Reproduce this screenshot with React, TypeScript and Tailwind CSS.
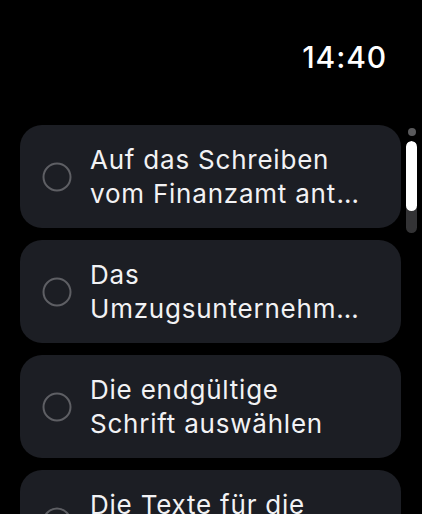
import React from 'react';

type Task = { first: string; second: string };

const tasks: Task[] = [
  { first: 'Auf das Schreiben', second: 'vom Finanzamt antworten' },
  { first: 'Das', second: 'Umzugsunternehmen beauftragen' },
  { first: 'Die endgültige', second: 'Schrift auswählen' },
  { first: 'Die Texte für die', second: 'Website schreiben' },
];

const Circle = () => (
  <svg width="30" height="30" viewBox="0 0 30 30" className="shrink-0">
    <circle cx="15" cy="15" r="13.5" fill="none" stroke="#5e5f64" strokeWidth="2" />
  </svg>
);

const TaskCard: React.FC<{ task: Task }> = ({ task }) => (
  <div className="flex h-[103px] shrink-0 items-center gap-[18px] rounded-[22px] bg-[#1c1e24] pl-[22px] pr-[34px]">
    <Circle />
    <div className="min-w-0 flex-1 text-[26px] leading-[34px] tracking-[0.03em] text-[#f2f2f4]">
      <div className="truncate">{task.first}</div>
      <div className="truncate">{task.second}</div>
    </div>
  </div>
);

export default function App() {
  return (
    <div
      className="relative h-[514px] w-[422px] overflow-hidden bg-black"
      style={{ fontFamily: 'Inter, "Noto Sans", sans-serif' }}
    >
      <div className="flex justify-end pr-[35px] pt-[42px] text-[30px] font-medium leading-none tracking-[0.03em] text-white">
        14:40
      </div>

      <div className="flex flex-col gap-[12px] pl-[20px] pr-[21px] pt-[53px]">
        {tasks.map((t) => (
          <TaskCard key={t.first} task={t} />
        ))}
      </div>

      {/* scroll indicator */}
      <div className="absolute left-[408px] top-[128px] h-[8px] w-[8px] rounded-full bg-[#5a5a5c]" />
      <div className="absolute left-[406px] top-[141px] h-[92px] w-[11px] overflow-hidden rounded-full bg-[#333335]">
        <div className="h-[70px] w-full rounded-full bg-white" />
      </div>
    </div>
  );
}
